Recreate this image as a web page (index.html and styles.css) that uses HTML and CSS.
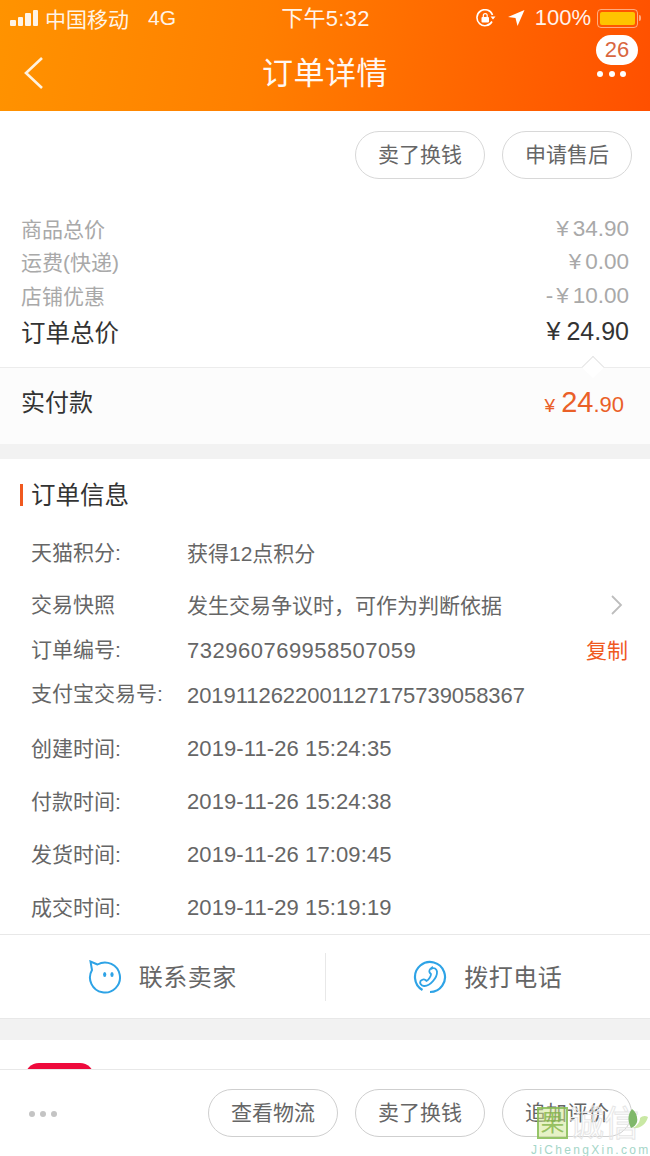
FILE: index.html
```html
<!DOCTYPE html>
<html lang="zh-CN">
<head>
  <meta charset="UTF-8">
  <meta name="viewport" content="width=device-width, initial-scale=1.0">
  <title>订单详情</title>
  <link rel="stylesheet" href="styles.css">
</head>
<body>
  <div class="page">

    <!-- Header -->
    <header class="top">
      <div class="status">
        <div class="status-left">
          <span class="signal"><i></i><i></i><i></i><i></i></span>
          <span>中国移动</span>
          <span class="net">4G</span>
        </div>
        <div class="status-time">下午5:32</div>
        <div class="status-right">
          <svg class="lock" width="20" height="18" viewBox="0 0 20 18">
            <path d="M16.500 6A8 8 0 1 0 16 12.500" fill="none" stroke="#fff" stroke-width="1.600"/>
            <path d="M19.500 7.500h-5l2.500 3z" fill="#fff"/>
            <rect x="5.500" y="8" width="7.500" height="5.500" rx="1" fill="#fff"/>
            <path d="M7.300 8V6.500a1.950 1.950 0 0 1 3.900 0V8" fill="none" stroke="#fff" stroke-width="1.200"/>
          </svg>
          <svg class="arrow" width="18" height="16" viewBox="0 0 18 16">
            <path d="M17.500 0L1 7l7.500 1L10.500 16z" fill="#fff"/>
          </svg>
          <span class="pct">100%</span>
          <span class="battery"><i></i></span>
          <span class="nub"></span>
        </div>
      </div>
      <div class="nav">
        <svg class="back" width="22" height="34" viewBox="0 0 22 34">
          <path d="M19 2L3 17l16 15" fill="none" stroke="#fff3e0" stroke-width="2.600"/>
        </svg>
        <h1>订单详情</h1>
        <div class="more">
          <span class="badge">26</span>
          <span class="dots"><i></i><i></i><i></i></span>
        </div>
      </div>
    </header>

    <!-- Tombol atas -->
    <div class="actions">
      <button class="pill">卖了换钱</button>
      <button class="pill">申请售后</button>
    </div>

    <!-- Harga -->
    <section class="prices">
      <div class="price-row"><span>商品总价</span><span class="amount"><span class="yen">¥</span>34.90</span></div>
      <div class="price-row"><span>运费(快递)</span><span class="amount"><span class="yen">¥</span>0.00</span></div>
      <div class="price-row"><span>店铺优惠</span><span class="amount"><span class="minus">-</span><span class="yen">¥</span>10.00</span></div>
      <div class="price-row total"><span>订单总价</span><span class="amount"><span class="yen">¥</span>24.90</span></div>
    </section>

    <div class="paid">
      <span class="notch"></span>
      <span class="paid-label">实付款</span>
      <span class="paid-value"><small>¥</small><b>24</b><em>.90</em></span>
    </div>

    <div class="gap gap-a"></div>

    <!-- Info order -->
    <section class="info">
      <h2>订单信息</h2>
      <div class="info-row r1"><span class="key">天猫积分:</span><span class="val">获得12点积分</span></div>
      <div class="info-row r2">
        <span class="key">交易快照</span><span class="val">发生交易争议时，可作为判断依据</span>
        <svg class="chev" width="14" height="22" viewBox="0 0 14 22">
          <path d="M2 2l9 9-9 9" fill="none" stroke="#bdbdbd" stroke-width="1.800"/>
        </svg>
      </div>
      <div class="info-row r3"><span class="key">订单编号:</span><span class="val num order-no">732960769958507059</span><span class="copy">复制</span></div>
      <div class="info-row r4"><span class="key">支付宝交易号:</span><span class="val num trade-no">2019112622001127175739058367</span></div>
      <div class="info-row r5"><span class="key">创建时间:</span><span class="val num">2019-11-26 15:24:35</span></div>
      <div class="info-row r5"><span class="key">付款时间:</span><span class="val num">2019-11-26 15:24:38</span></div>
      <div class="info-row r5"><span class="key">发货时间:</span><span class="val num">2019-11-26 17:09:45</span></div>
      <div class="info-row r5"><span class="key">成交时间:</span><span class="val num">2019-11-29 15:19:19</span></div>
    </section>

    <!-- Kontak -->
    <div class="contact">
      <div class="contact-item">
        <svg width="34" height="34" viewBox="0 0 34 34">
          <path d="M9.500 4.500L2.500 1.500 4 10A15 15 0 1 0 9.500 4.500z" fill="none" stroke="#2ea3e6" stroke-width="2"/>
          <ellipse cx="16.700" cy="14.500" rx="1.600" ry="2.500" fill="#2ea3e6"/>
          <ellipse cx="24" cy="14.500" rx="1.600" ry="2.500" fill="#2ea3e6"/>
        </svg>
        <span>联系卖家</span>
      </div>
      <div class="contact-item">
        <svg width="34" height="34" viewBox="0 0 34 34">
          <path d="M9.500 30A15 15 0 1 1 17 32" fill="none" stroke="#2ea3e6" stroke-width="2.200"/>
          <path d="M19 8.500c2-1 4.500 0 5 3 .5 6-7 15-13 14.500-3-.3-4.500-3-3.500-5 1-1.500 3.500-2 5-1l1 1c2-1 4.500-4.500 4.500-7l-1-1c-1.500-1.500-.5-4 2-5.500z" fill="none" stroke="#2ea3e6" stroke-width="1.800"/>
        </svg>
        <span>拨打电话</span>
      </div>
    </div>

    <div class="gap gap-b"></div>

    <!-- Kartu toko, terpotong oleh bar bawah -->
    <div class="shop"><span class="shop-logo"></span></div>

    <!-- Bar bawah -->
    <footer class="bottom">
      <span class="bottom-dots"><i></i><i></i><i></i></span>
      <button class="pill">查看物流</button>
      <button class="pill">卖了换钱</button>
      <button class="pill">追加评价</button>
    </footer>

    <!-- Watermark -->
    <div class="mark">
      <div class="mark-top">
        <span class="mark-box">果</span>
        <span class="mark-name">诚信</span>
        <svg class="mark-heart" width="20" height="20" viewBox="0 0 20 20">
          <path d="M4 0c-4 5-5 11-1 19 3-1 5-3 6-6C10 8 8 3 4 0z" fill="#7fb86a"/>
          <path d="M5 19c6 1 13-3 15-11-3-2-6-1-8 1 0 4-3 8-7 10z" fill="#c9e8a4"/>
        </svg>
      </div>
      <div class="mark-url">JiChengXin.com</div>
    </div>

  </div>
</body>
</html>
```

FILE: styles.css
```css
* {
  box-sizing: border-box;
}

body {
  margin: 0;
  font-family: "Liberation Sans", "Noto Sans CJK SC", sans-serif;
  background-color: #fff;
}

.page {
  position: relative;
  width: 650px;
  height: 1156px;
  overflow: hidden;
  display: flex;
  flex-direction: column;
}

/* Header */
.top {
  height: 111px;
  flex-shrink: 0;
  color: #fff;
  background: linear-gradient(100deg, #ff9300 0%, #ff7f00 40%, #ff5000 100%);
}

.status {
  height: 37px;
  padding: 0 9px 2px 10px;
  display: grid;
  grid-template-columns: 1fr auto 1fr;
  align-items: center;
  font-size: 21px;
}

.status-left {
  display: flex;
  align-items: center;
  opacity: 0.9;
}

.status-time {
  padding-bottom: 4px;
  font-size: 22px;
  letter-spacing: 0.3px;
  opacity: 0.92;
}

.signal {
  display: flex;
  align-items: flex-end;
  gap: 2px;
  margin-right: 7px;
}

.signal i {
  width: 5.500px;
  background-color: #fff;
  border-radius: 1px;
}

.signal i:nth-child(1) { height: 6px; }
.signal i:nth-child(2) { height: 9px; }
.signal i:nth-child(3) { height: 13px; }
.signal i:nth-child(4) { height: 16px; }

.net {
  margin-left: 19px;
}

.status-right {
  display: flex;
  align-items: center;
  justify-content: flex-end;
}

.lock {
  margin-right: 11px;
}

.arrow {
  margin-right: 10px;
}

.pct {
  margin-right: 6px;
  font-size: 22px;
  opacity: 0.92;
}

.battery {
  width: 41px;
  height: 19px;
  padding: 2px;
  border: 1px solid rgba(255, 255, 255, 0.5);
  border-radius: 4px;
}

.battery i {
  display: block;
  height: 100%;
  background-color: #ffc400;
  border-radius: 2px;
}

.nub {
  width: 2px;
  height: 6px;
  margin-left: 1px;
  background-color: rgba(255, 255, 255, 0.5);
  border-radius: 0 2px 2px 0;
}

.nav {
  position: relative;
  height: 74px;
  display: flex;
  align-items: center;
  justify-content: center;
}

.nav h1 {
  margin: 0 0 8px;
  font-size: 31px;
  font-weight: normal;
  letter-spacing: 0.5px;
  opacity: 0.95;
}

.back {
  position: absolute;
  left: 23px;
  top: 19px;
}

.more {
  position: absolute;
  left: 596px;
  top: -2px;
  width: 42px;
}

.badge {
  display: block;
  width: 42px;
  height: 30px;
  line-height: 30px;
  border-radius: 15px;
  text-align: center;
  background-color: #fff;
  color: #d9663f;
  font-size: 22px;
}

.dots {
  display: flex;
  gap: 5.500px;
  margin: 6px 0 0 1px;
}

.dots i {
  width: 6px;
  height: 6px;
  border-radius: 50%;
  background-color: #fff;
}

/* Tombol */
.pill {
  width: 130px;
  height: 48px;
  padding: 0 0 4px;
  font: inherit;
  font-size: 21px;
  color: #666;
  background-color: #fff;
  border: 1px solid #d8d8d8;
  border-radius: 24px;
}

.actions {
  height: 89px;
  padding: 20px 18px 0 0;
  display: flex;
  justify-content: flex-end;
  gap: 17px;
  flex-shrink: 0;
}

/* Harga */
.prices {
  padding: 11px 21px 0 21px;
  height: 167px;
  flex-shrink: 0;
}

.price-row {
  height: 33.500px;
  display: flex;
  align-items: center;
  justify-content: space-between;
  font-size: 21px;
  color: #a9a9a9;
}

.amount {
  padding-top: 2px;
  font-size: 22.500px;
  white-space: nowrap;
}

.yen {
  margin-right: 4px;
}

.minus {
  margin-right: 3px;
}

.price-row.total {
  height: 38px;
  padding-top: 2px;
  font-size: 24.500px;
  color: #333;
}

.total .amount {
  padding-top: 0;
  font-size: 25px;
}

.total .yen {
  margin-right: 6px;
}

/* Bayar */
.paid {
  position: relative;
  height: 77px;
  flex-shrink: 0;
  padding: 0 26px 8px 21px;
  display: flex;
  align-items: center;
  justify-content: space-between;
  background-color: #fcfcfc;
  border-top: 1px solid #ececec;
}

.notch {
  position: absolute;
  left: 585px;
  top: -9px;
  width: 16px;
  height: 16px;
  background-color: #fff;
  border-top: 1px solid #e4e4e4;
  border-left: 1px solid #e4e4e4;
  transform: rotate(45deg);
}

.paid-label {
  font-size: 24px;
  color: #333;
  padding-bottom: 3px;
}

.paid-value {
  color: #ea6028;
  font-size: 22px;
}

.paid-value small {
  font-size: 19px;
  margin-right: 6px;
}

.paid-value b {
  font-size: 29px;
  font-weight: normal;
}

.paid-value em {
  font-style: normal;
}

.gap {
  flex-shrink: 0;
  background-color: #f2f2f2;
}

.gap-a {
  height: 15px;
}

.gap-b {
  height: 21px;
}

/* Info order */
.info {
  height: 475px;
  flex-shrink: 0;
  padding-left: 31px;
  padding-right: 22px;
}

.info h2 {
  position: relative;
  height: 72px;
  margin: 0;
  line-height: 74px;
  font-size: 24.500px;
  font-weight: normal;
  color: #333;
}

.info h2::before {
  content: "";
  position: absolute;
  left: -11px;
  top: 25px;
  width: 3px;
  height: 22px;
  background-color: #f0591f;
}

.info-row {
  display: flex;
  align-items: center;
  font-size: 21px;
  color: #666;
}

.r1 { height: 44px; }
.r2 { height: 60px; }
.r3 { height: 30px; }
.r4 { height: 57px; }
.r5 { height: 53px; }

.key {
  width: 156px;
  flex-shrink: 0;
  padding-bottom: 4px;
}

.val {
  flex: 1;
  padding-bottom: 2px;
}

.num {
  font-size: 22px;
  letter-spacing: 0.100px;
  padding-bottom: 0;
  white-space: nowrap;
}

.order-no {
  padding-top: 2px;
  letter-spacing: 0.500px;
}

.trade-no {
  padding-top: 4px;
  letter-spacing: -0.050px;
}

.copy {
  color: #f0591f;
  padding-bottom: 2px;
}

.chev {
  margin-right: 4px;
}

/* Kontak */
.contact {
  height: 85px;
  flex-shrink: 0;
  display: flex;
  align-items: center;
  border-top: 1px solid #e8e8e8;
  border-bottom: 1px solid #e8e8e8;
}

.contact-item {
  flex: 1;
  height: 48px;
  display: flex;
  align-items: center;
  justify-content: center;
  gap: 17px;
  font-size: 24px;
  letter-spacing: 0.500px;
  color: #666;
}

.contact-item span {
  padding-bottom: 3px;
}

.contact-item + .contact-item {
  border-left: 1px solid #e8e8e8;
}

/* Kartu toko */
.shop {
  height: 29px;
  flex-shrink: 0;
  padding: 23px 0 0 25px;
  overflow: hidden;
}

.shop-logo {
  display: block;
  width: 69px;
  height: 30px;
  background-color: #ee0a3c;
  border-radius: 14px 14px 0 0;
}

/* Bar bawah */
.bottom {
  flex: 1;
  padding: 19px 18px 0 29px;
  display: flex;
  align-items: flex-start;
  gap: 17px;
  border-top: 1px solid #e8e8e8;
  background-color: #fff;
}

.bottom .pill {
  border-color: #cfcfcf;
}

.bottom-dots {
  display: flex;
  gap: 5px;
  margin: 22px auto 0 0;
}

.bottom-dots i {
  width: 6px;
  height: 6px;
  border-radius: 50%;
  background-color: #c4c4c4;
}

/* Watermark */
.mark {
  position: absolute;
  left: 531px;
  top: 1107px;
  width: 119px;
}

.mark-top {
  display: flex;
  align-items: flex-start;
  height: 36px;
  padding-left: 6px;
}

.mark-box {
  width: 31px;
  height: 32px;
  line-height: 28px;
  text-align: center;
  font-size: 24px;
  color: rgba(130, 180, 70, 0.8);
  border: 2px solid rgba(130, 185, 80, 0.8);
  background-color: rgba(205, 230, 140, 0.5);
}

.mark-name {
  margin-left: 1px;
  font-size: 35px;
  line-height: 34px;
  color: transparent;
  -webkit-text-stroke: 1px #e6e6e6;
  white-space: nowrap;
}

.mark-heart {
  position: absolute;
  left: 97px;
  top: 2px;
}

.mark-url {
  font-size: 12px;
  letter-spacing: 2.300px;
  color: #a5d6c8;
  white-space: nowrap;
}
```
